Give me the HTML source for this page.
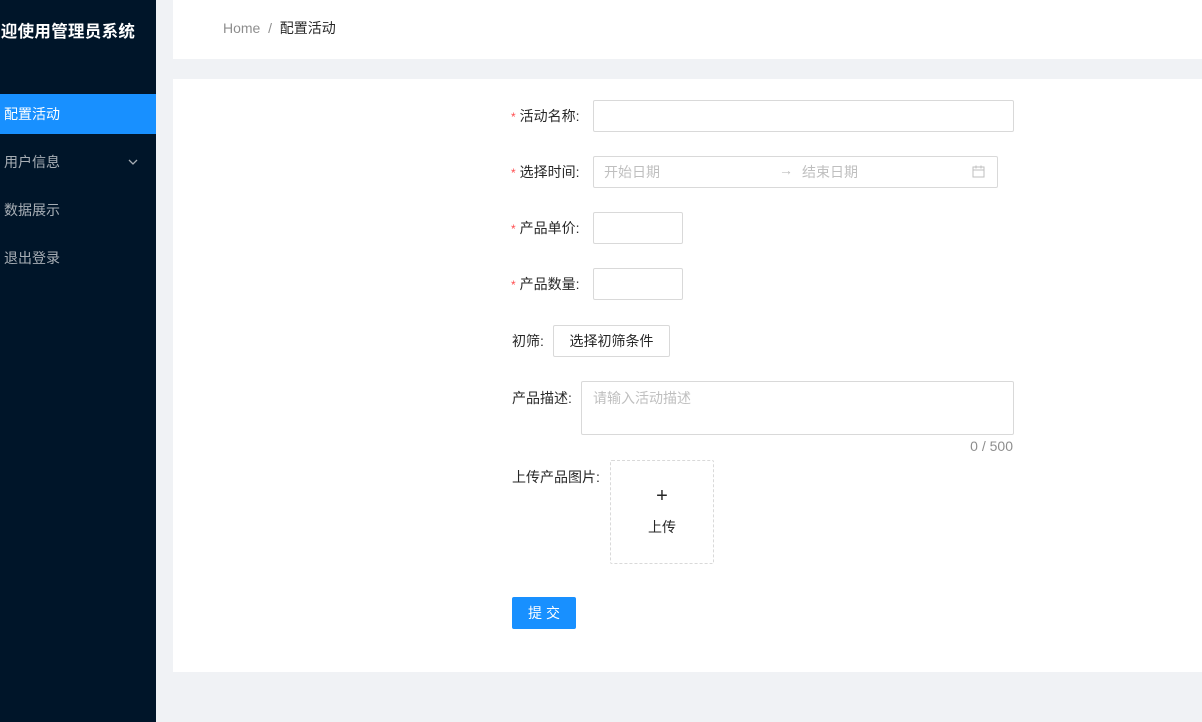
<!DOCTYPE html>
<html><head><meta charset="utf-8"><style>
*{margin:0;padding:0;box-sizing:border-box}
body{width:1202px;height:722px;background:#f0f2f5;font-family:"Liberation Sans","Noto Sans CJK SC",sans-serif;font-size:14px;color:rgba(0,0,0,.85);position:relative;overflow:hidden}
.a{position:absolute}
.side{left:0;top:0;width:156px;height:722px;background:#001529}
.title{left:-16px;top:18px;color:#fff;font-weight:bold;font-size:16.5px;white-space:nowrap;letter-spacing:.3px}
.mi{left:0;width:156px;height:40px;line-height:40px;padding-left:4px;color:rgba(255,255,255,.65);font-size:14px}
.sel{background:#1890ff;color:#fff}
.hdr{left:173px;top:0;width:1029px;height:59px;background:#fff}
.crumb{left:223px;top:18px;color:rgba(0,0,0,.45)}
.crumb b{font-weight:normal;color:rgba(0,0,0,.85)}
.cont{left:173px;top:79px;width:1029px;height:593px;background:#fff}
.inp{border:1px solid #d9d9d9;border-radius:2px;background:#fff}
.lbl{white-space:nowrap;font-size:14px}
.lbl i{font-style:normal;color:#ff4d4f;font-size:12px;margin-right:4px;font-family:SimSun,sans-serif}
.ph{color:#bfbfbf}
</style></head><body>
<div class="a side"></div>
<div class="a title">欢迎使用管理员系统</div>
<div class="a mi sel" style="top:94px">配置活动</div>
<div class="a mi" style="top:142px">用户信息<svg class="a" style="left:128px;top:16px" width="10" height="8" viewBox="0 0 10 8"><path d="M1 2l4 4 4-4" stroke="rgba(255,255,255,.65)" stroke-width="1.3" fill="none"/></svg></div>
<div class="a mi" style="top:190px">数据展示</div>
<div class="a mi" style="top:238px">退出登录</div>
<div class="a hdr"></div>
<div class="a crumb">Home &nbsp;/&nbsp; <b>配置活动</b></div>
<div class="a cont"></div>

<div class="a lbl" style="left:511px;top:106px"><i>*</i>活动名称:</div>
<div class="a inp" style="left:593px;top:100px;width:421px;height:32px"></div>

<div class="a lbl" style="left:511px;top:162px"><i>*</i>选择时间:</div>
<div class="a inp" style="left:593px;top:156px;width:405px;height:32px"></div>
<div class="a ph" style="left:604px;top:162px">开始日期</div>
<div class="a ph" style="left:779px;top:162px">→</div>
<div class="a ph" style="left:802px;top:162px">结束日期</div>
<svg class="a" style="left:972px;top:165px" width="13" height="13" viewBox="0 0 13 13"><rect x="1" y="2" width="11" height="10" fill="none" stroke="#bfbfbf"/><path d="M1 5h11M4 0.5v3M9 0.5v3" stroke="#bfbfbf"/></svg>

<div class="a lbl" style="left:511px;top:218px"><i>*</i>产品单价:</div>
<div class="a inp" style="left:593px;top:212px;width:90px;height:32px"></div>
<div class="a lbl" style="left:511px;top:274px"><i>*</i>产品数量:</div>
<div class="a inp" style="left:593px;top:268px;width:90px;height:32px"></div>

<div class="a lbl" style="left:512px;top:331px">初筛:</div>
<div class="a inp" style="left:553px;top:325px;width:117px;height:32px;text-align:center;line-height:30px">选择初筛条件</div>

<div class="a lbl" style="left:512px;top:388px">产品描述:</div>
<div class="a inp" style="left:581px;top:381px;width:433px;height:54px"></div>
<div class="a ph" style="left:593px;top:388px">请输入活动描述</div>
<div class="a" style="left:950px;top:438px;width:63px;text-align:right;color:rgba(0,0,0,.45)">0 / 500</div>

<div class="a lbl" style="left:512px;top:467px">上传产品图片:</div>
<div class="a" style="left:610px;top:460px;width:104px;height:104px;border:1px dashed #d9d9d9;border-radius:2px;background:#fff"></div>
<div class="a" style="left:610px;top:484px;width:104px;text-align:center;font-size:20px;line-height:24px">+</div>
<div class="a" style="left:610px;top:517px;width:104px;text-align:center">上传</div>

<div class="a" style="left:512px;top:597px;width:64px;height:32px;background:#1890ff;border-radius:2px;color:#fff;text-align:center;line-height:32px;letter-spacing:4px;padding-left:4px">提交</div>
</body></html>
